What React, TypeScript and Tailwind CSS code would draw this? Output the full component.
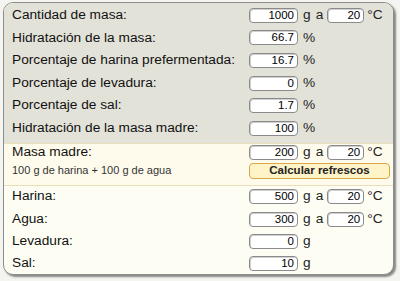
import React from 'react';

const font = { fontFamily: '"Liberation Sans", Arial, sans-serif' };

const Box: React.FC<{ value: string; w?: string }> = ({ value, w = 'w-[49px]' }) => (
  <div
    className={`${w} h-[15px] bg-white border border-[#8a8a8a] rounded-[4px] text-right text-[11.5px] leading-[13px] pr-[3px] text-black shadow-[inset_1px_1px_0_#d0d0d0]`}
  >
    {value}
  </div>
);

const Row: React.FC<{
  label: string;
  value: string;
  unit: string;
  temp?: string;
  h?: string;
}> = ({ label, value, unit, temp, h = 'h-[22.6px]' }) => (
  <div className={`flex items-center ${h}`}>
    <div className="w-[237px] text-[13.7px] text-[#111]">{label}</div>
    <Box value={value} />
    <span className="ml-[5px] text-[13.7px] text-[#222]">{unit}</span>
    {temp && (
      <>
        <span className="ml-[5px] mr-[4px] text-[13.7px] text-[#222]">a</span>
        <Box value={temp} w="w-[37px]" />
        <span className="ml-[3px] text-[13.7px] text-[#222]">°C</span>
      </>
    )}
  </div>
);

export default function App() {
  return (
    <div className="w-[400px] h-[281px] bg-[#f4f4f0] pt-[2px] pl-[3px]" style={font}>
      <div className="w-[391px] h-[273px] border border-[#8c8c8c] rounded-[10px] overflow-hidden shadow-[2px_2px_2px_rgba(0,0,0,0.45)] flex flex-col bg-[#fdfdf3]">
        <div className="bg-[#e3e2d9] pl-[8px] pt-[1px] pb-[3px]">
          <Row label="Cantidad de masa:" value="1000" unit="g" temp="20" />
          <Row label="Hidratación de la masa:" value="66.7" unit="%" />
          <Row label="Porcentaje de harina prefermentada:" value="16.7" unit="%" />
          <Row label="Porcentaje de levadura:" value="0" unit="%" />
          <Row label="Porcentaje de sal:" value="1.7" unit="%" />
          <Row label="Hidratación de la masa madre:" value="100" unit="%" />
        </div>
        <div className="bg-[#fffbec] border-y border-[#eadfb8] pl-[8px] pb-[4px]">
          <Row label="Masa madre:" value="200" unit="g" temp="20" h="h-[17px]" />
          <div className="flex items-center h-[20px]">
            <div className="w-[237px] text-[11px] text-[#333]">100 g de harina + 100 g de agua</div>
            <button className="w-[141px] h-[16px] bg-[#fff3c8] border border-[#d9a84a] rounded-[4px] text-[11.5px] leading-[13px] font-bold text-[#222]">
              Calcular refrescos
            </button>
          </div>
        </div>
        <div className="pl-[8px]">
          <Row label="Harina:" value="500" unit="g" temp="20" h="h-[22.3px]" />
          <Row label="Agua:" value="300" unit="g" temp="20" h="h-[22.3px]" />
          <Row label="Levadura:" value="0" unit="g" h="h-[22.3px]" />
          <Row label="Sal:" value="10" unit="g" h="h-[22.3px]" />
        </div>
      </div>
    </div>
  );
}
